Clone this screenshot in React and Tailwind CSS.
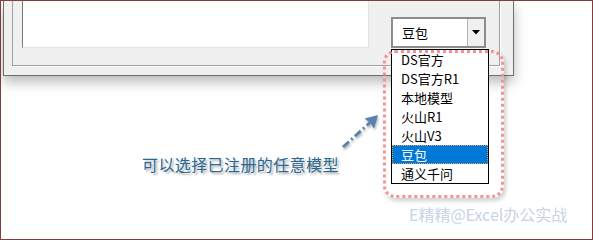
import React from "react";

const items = ["DS官方", "DS官方R1", "本地模型", "火山R1", "火山V3", "豆包", "通义千问"];

function App() {
  return (
    <div
      className="relative w-[593px] h-[240px] overflow-hidden border border-[#823c3c] bg-white"
      style={{ fontFamily: '"Noto Sans CJK SC", "Noto Sans", sans-serif' }}
    >
      {/* dialog window, top part cut off */}
      <div className="ml-[2px] w-[511px] border-l border-r border-b border-[#6e6e6e] bg-[#f0f0f0] pl-[8px] pr-[13px] pb-[9px] shadow-[0_6px_12px_rgba(0,0,0,0.28)]">
        {/* group frame */}
        <div className="flex items-end border-l border-r border-b border-[#a0a0a0] shadow-[1px_1px_0_#ffffff] pl-[9px] pr-[13px] pb-[17px]">
          {/* text box */}
          <div className="h-[47px] w-[347px] bg-white border-l border-[#7a7a7a] border-r border-b border-r-[#e3e3e3] border-b-[#e3e3e3]" />
          {/* combo box */}
          <div className="ml-auto flex h-[31px] w-[95px] border-2 border-[#8c8c8c] bg-white">
            <div className="flex flex-1 items-center pl-[9px] text-[13px] text-black">豆包</div>
            <div className="flex w-[17px] items-center justify-center border-l border-[#b5b5b5] bg-[#f0f0f0]">
              <svg width="8" height="5" viewBox="0 0 8 5">
                <polygon points="0,0 8,0 4,4.5" fill="#000" />
              </svg>
            </div>
          </div>
        </div>
      </div>

      {/* dropdown list */}
      <div className="absolute left-[390px] top-[48px] w-[98px] border border-black bg-white">
        {items.map((it) => (
          <div
            key={it}
            className={
              it === "豆包"
                ? "h-[19px] pl-[9px] text-[13px] leading-[19px] bg-[#0078d7] text-white outline outline-1 outline-dotted outline-[#e0a050] -outline-offset-1"
                : "h-[19px] pl-[9px] text-[13px] leading-[19px] text-black"
            }
          >
            {it}
          </div>
        ))}
      </div>

      {/* dotted highlight */}
      <div className="absolute left-[382px] top-[49px] h-[148px] w-[121px] rounded-[12px] border-[3px] border-dotted border-[#f39393] shadow-[2px_3px_4px_rgba(0,0,0,0.18)]" />

      {/* arrow */}
      <svg
        className="absolute left-0 top-0 drop-shadow-[1px_2px_1px_rgba(0,0,0,0.3)]"
        width="593"
        height="240"
        viewBox="0 0 593 240"
      >
        <line x1="342" y1="146" x2="369" y2="121.5" stroke="#5a82b0" strokeWidth="3" strokeDasharray="8 3 2 3" />
        <polygon points="377,114 363.5,117.5 369.5,122 373,127.5" fill="#5a82b0" />
      </svg>

      {/* caption */}
      <div className="absolute left-[141px] top-[152px] text-[16px] leading-[22px] tracking-[0.4px] text-[#2a6894] [text-shadow:2px_2px_2px_rgba(0,0,0,0.3)]">
        可以选择已注册的任意模型
      </div>

      {/* watermark */}
      <div className="absolute left-[408px] top-[202px] text-[16px] leading-[22px] text-[#c8d3e8]">
        E精精@Excel办公实战
      </div>
    </div>
  );
}

export default App;
